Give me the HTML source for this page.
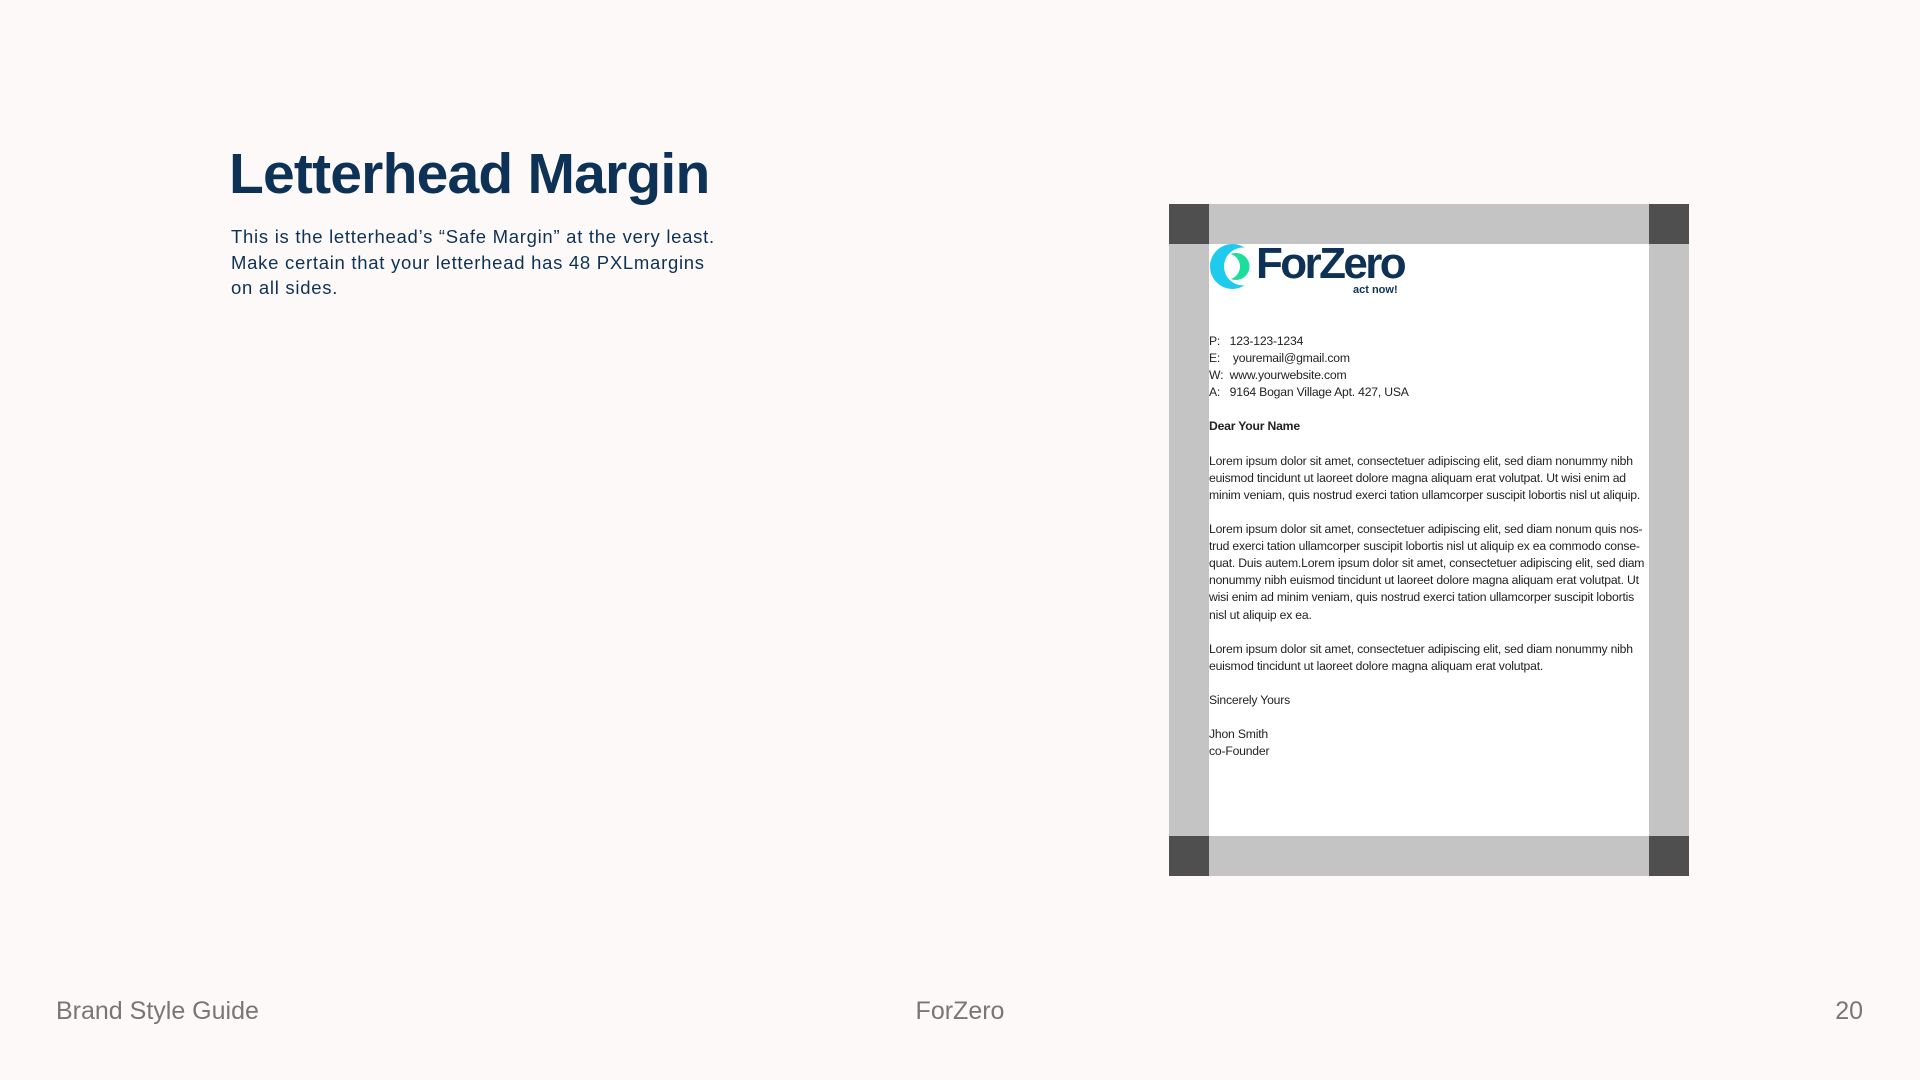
<!DOCTYPE html>
<html><head><meta charset="utf-8"><style>
*{margin:0;padding:0;box-sizing:border-box}
body{width:1920px;height:1080px;background:#fdf9f8;position:relative;overflow:hidden;font-family:"Liberation Sans",sans-serif}
.h1{position:absolute;left:229px;top:141px;font-size:57px;font-weight:bold;color:#0d3256;letter-spacing:-0.8px;white-space:nowrap}
.p{position:absolute;left:231px;top:224px;font-size:18.5px;line-height:25.5px;color:#0d3256;white-space:nowrap;letter-spacing:0.72px}
.foot{position:absolute;top:997px;font-size:25px;color:#777;white-space:nowrap}
.box{position:absolute;left:1169px;top:204px;width:520px;height:672px;background:#c4c4c4}
.inner{position:absolute;left:40px;top:40px;right:40px;bottom:40px;background:#fff}
.c{position:absolute;width:40px;height:40px;background:#4f4f4f}
.txt{position:absolute;left:1209px;top:333px;font-size:12.2px;line-height:17.1px;color:#222;white-space:nowrap;letter-spacing:-0.2px}
.logo{position:absolute;left:1256px;top:239px;font-size:44px;font-weight:bold;color:#0d3256;letter-spacing:-2.6px}
.tag{position:absolute;left:1353px;top:284px;font-size:11px;font-weight:bold;color:#0d3256}
</style></head><body>
<div class="h1">Letterhead Margin</div>
<div class="p">This is the letterhead’s “Safe Margin” at the very least.<br>Make certain that your letterhead has 48 PXLmargins<br>on all sides.</div>
<div class="box"><div class="inner"></div>
<div class="c" style="left:0;top:0"></div><div class="c" style="right:0;top:0"></div>
<div class="c" style="left:0;bottom:0"></div><div class="c" style="right:0;bottom:0"></div></div>
<svg style="position:absolute;left:1205px;top:240px" width="50" height="55" viewBox="0 0 50 55">
<defs><mask id="m1"><rect width="50" height="55" fill="#fff"/><circle cx="38" cy="26.5" r="19" fill="#000"/></mask>
<mask id="m2"><rect width="50" height="55" fill="#fff"/><circle cx="22" cy="26.5" r="13" fill="#000"/></mask></defs>
<circle cx="27.5" cy="26.5" r="22.5" fill="#1ecbed" mask="url(#m1)"/>
<circle cx="31" cy="26.5" r="13.5" fill="#1cde9c" mask="url(#m2)"/>
</svg>
<div class="logo">ForZero</div>
<div class="tag">act now!</div>
<div class="txt">P:&nbsp;&nbsp; 123-123-1234<br>E:&nbsp;&nbsp;&nbsp; youremail@gmail.com<br>W:&nbsp; www.yourwebsite.com<br>A:&nbsp;&nbsp; 9164 Bogan Village Apt. 427, USA<br><br>
<b>Dear Your Name</b><br><br>
Lorem ipsum dolor sit amet, consectetuer adipiscing elit, sed diam nonummy nibh<br>euismod tincidunt ut laoreet dolore magna aliquam erat volutpat. Ut wisi enim ad<br>minim veniam, quis nostrud exerci tation ullamcorper suscipit lobortis nisl ut aliquip.<br><br>
Lorem ipsum dolor sit amet, consectetuer adipiscing elit, sed diam nonum quis nos-<br>trud exerci tation ullamcorper suscipit lobortis nisl ut aliquip ex ea commodo conse-<br>quat. Duis autem.Lorem ipsum dolor sit amet, consectetuer adipiscing elit, sed diam<br>nonummy nibh euismod tincidunt ut laoreet dolore magna aliquam erat volutpat. Ut<br>wisi enim ad minim veniam, quis nostrud exerci tation ullamcorper suscipit lobortis<br>nisl ut aliquip ex ea.<br><br>
Lorem ipsum dolor sit amet, consectetuer adipiscing elit, sed diam nonummy nibh<br>euismod tincidunt ut laoreet dolore magna aliquam erat volutpat.<br><br>
Sincerely Yours<br><br>Jhon Smith<br>co-Founder</div>
<div class="foot" style="left:56px">Brand Style Guide</div>
<div class="foot" style="left:0;width:1920px;text-align:center">ForZero</div>
<div class="foot" style="right:57px">20</div>
</body></html>
